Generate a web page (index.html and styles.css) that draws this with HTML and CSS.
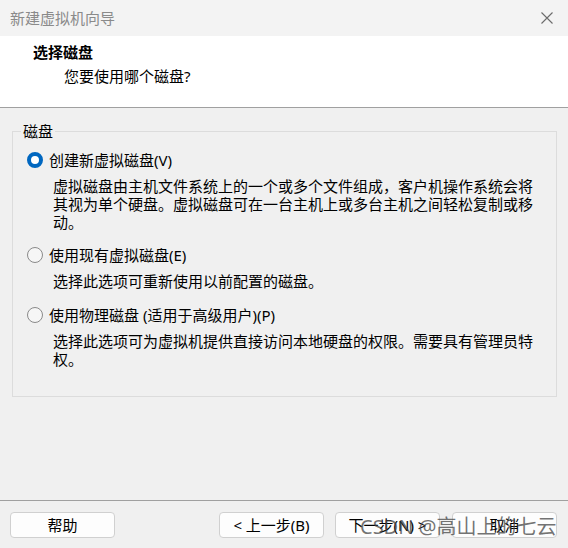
FILE: index.html
```html
<!DOCTYPE html>
<html lang="zh-CN">
<head>
<meta charset="utf-8">
<title>新建虚拟机向导</title>
<link rel="stylesheet" href="styles.css">
</head>
<body>
<div class="window">
  <div class="titlebar">
    <span class="title">新建虚拟机向导</span>
    <svg class="close" width="12" height="12" viewBox="0 0 12 12"><path d="M0.5 0.5 L11.5 11.5 M11.5 0.5 L0.5 11.5" stroke="#6b6b6b" stroke-width="1.1" fill="none"/></svg>
  </div>
  <div class="header">
    <div class="h-title">选择磁盘</div>
    <div class="h-sub">您要使用哪个磁盘?</div>
  </div>
  <div class="content">
    <fieldset class="group">
      <legend>磁盘</legend>
      <div class="option first">
        <div class="opt-row"><span class="radio checked"></span><span class="opt-label">创建新虚拟磁盘(V)</span></div>
        <div class="desc">虚拟磁盘由主机文件系统上的一个或多个文件组成，客户机操作系统会将<br>其视为单个硬盘。虚拟磁盘可在一台主机上或多台主机之间轻松复制或移<br>动。</div>
      </div>
      <div class="option">
        <div class="opt-row"><span class="radio"></span><span class="opt-label">使用现有虚拟磁盘(E)</span></div>
        <div class="desc">选择此选项可重新使用以前配置的磁盘。</div>
      </div>
      <div class="option third">
        <div class="opt-row"><span class="radio"></span><span class="opt-label">使用物理磁盘 (适用于高级用户)(P)</span></div>
        <div class="desc">选择此选项可为虚拟机提供直接访问本地硬盘的权限。需要具有管理员特<br>权。</div>
      </div>
    </fieldset>
  </div>
  <div class="footer">
    <button class="btn">帮助</button>
    <div class="spacer"></div>
    <button class="btn">&lt; 上一步(B)</button>
    <button class="btn gap">下一步(N) &gt;</button>
    <button class="btn gap2">取消</button>
    <span class="watermark">CSDN @高山上的七云</span>
  </div>
</div>
</body>
</html>
```

FILE: styles.css
```css
html, body {
  margin: 0;
  padding: 0;
  background: #f0f0f0;
}
body {
  font-family: "Noto Sans", "Noto Sans CJK SC", sans-serif;
  font-size: 15px;
  line-height: 18px;
  color: #000;
}
.window {
  width: 568px;
  height: 548px;
  display: flex;
  flex-direction: column;
  background: #f0f0f0;
  overflow: hidden;
}
.titlebar {
  height: 36px;
  flex: none;
  background: #f3f3f3;
  display: flex;
  align-items: center;
  padding: 0 15px 0 10px;
  box-sizing: border-box;
}
.title {
  color: #8a8a8a;
  flex: 1;
  padding-bottom: 1px;
}
.close {
  display: block;
  margin-bottom: 1px;
}
.header {
  flex: none;
  height: 72px;
  background: #fff;
  border-bottom: 1px solid #a0a0a0;
  padding: 7px 0 0 33px;
  box-sizing: border-box;
}
.h-title {
  font-weight: bold;
  height: 18px;
}
.h-sub {
  margin-top: 6px;
  padding-left: 31px;
}
.content {
  flex: 1;
  padding: 14px 11px 0 12px;
}
.group {
  margin: 0;
  border: 1px solid #dcdcdc;
  padding: 0 14px 30px 14px;
  height: 275px;
  box-sizing: border-box;
}
.group legend {
  padding: 0 2px;
  margin-left: -6px;
  line-height: 18px;
}
.option {
  margin-top: 15px;
}
.option.first {
  margin-top: 11px;
}
.option.third {
  margin-top: 16px;
}
.opt-row {
  display: flex;
  align-items: center;
  height: 18px;
}
.radio {
  width: 16px;
  height: 16px;
  box-sizing: border-box;
  border-radius: 50%;
  border: 1px solid #8a8a8a;
  background: #f6f6f6;
  flex: none;
  margin-right: 6px;
}
.radio.checked {
  border: 4.5px solid #0067c0;
  background: #fff;
}
.desc {
  margin-top: 8px;
  padding-left: 26px;
}
.footer {
  position: relative;
  flex: none;
  height: 48px;
  border-top: 1px solid #a0a0a0;
  display: flex;
  align-items: flex-start;
  padding: 11px 11px 0 10px;
  box-sizing: border-box;
}
.spacer {
  flex: 1;
}
.btn {
  width: 105px;
  height: 26px;
  background: #fdfdfd;
  border: 1px solid #d0d0d0;
  border-radius: 4px;
  font-family: "Noto Sans", "Noto Sans CJK SC", sans-serif;
  font-size: 15px;
  line-height: 18px;
  color: #000;
  padding: 0;
}
.btn.gap {
  margin-left: 11px;
}
.btn.gap2 {
  margin-left: 12px;
}
.watermark {
  position: absolute;
  left: 360px;
  top: 14px;
  font-family: "Noto Sans", "Noto Sans CJK SC", sans-serif;
  font-size: 20px;
  line-height: 24px;
  color: rgba(70, 70, 70, 0.75);
  white-space: nowrap;
  pointer-events: none;
}
```
